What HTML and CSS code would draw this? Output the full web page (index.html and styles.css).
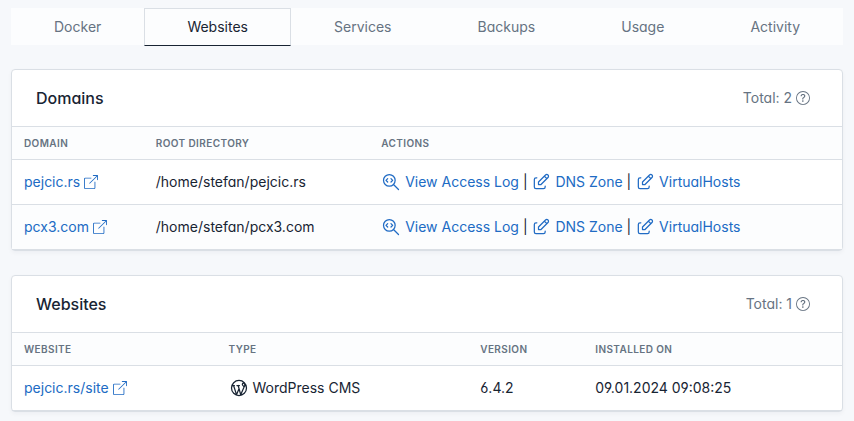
FILE: index.html
```html
<!DOCTYPE html>
<html lang="en">
<head>
<meta charset="utf-8">
<meta name="viewport" content="width=device-width, initial-scale=1">
<title>Websites</title>
<link rel="stylesheet" href="styles.css">
</head>
<body>
<svg class="sprite" aria-hidden="true">
  <symbol id="external" viewBox="0 0 16 16"><path fill="currentColor" d="M8.636 3.5a.5.5 0 0 0-.5-.5H1.5A1.5 1.5 0 0 0 0 4.5v10A1.5 1.5 0 0 0 1.5 16h10a1.5 1.5 0 0 0 1.5-1.5V7.864a.5.5 0 0 0-1 0V14.5a.5.5 0 0 1-.5.5h-10a.5.5 0 0 1-.5-.5v-10a.5.5 0 0 1 .5-.5h6.636a.5.5 0 0 0 .5-.5z"/><path fill="currentColor" d="M16 .5a.5.5 0 0 0-.5-.5h-5a.5.5 0 0 0 0 1h3.793L6.146 9.146a.5.5 0 1 0 .708.708L15 1.707V5.5a.5.5 0 0 0 1 0v-5z"/></symbol>
  <symbol id="question" viewBox="0 0 16 16"><path fill="currentColor" d="M8 15A7 7 0 1 1 8 1a7 7 0 0 1 0 14zm0 1A8 8 0 1 0 8 0a8 8 0 0 0 0 16z"/><path fill="currentColor" d="M5.255 5.786a.237.237 0 0 0 .241.247h.825c.138 0 .248-.113.266-.25.09-.656.54-1.134 1.342-1.134.686 0 1.314.343 1.314 1.168 0 .635-.374.927-.965 1.371-.673.489-1.206 1.06-1.168 1.987l.003.217a.25.25 0 0 0 .25.246h.811a.25.25 0 0 0 .25-.25v-.105c0-.718.273-.927 1.01-1.486.609-.463 1.244-.977 1.244-2.056 0-1.511-1.276-2.241-2.673-2.241-1.267 0-2.655.59-2.75 2.286zm1.557 5.763c0 .533.425.927 1.01.927.609 0 1.028-.394 1.028-.927 0-.552-.42-.94-1.029-.94-.584 0-1.009.388-1.009.94z"/></symbol>
  <symbol id="zoom-code" viewBox="0 0 24 24"><path d="M3 10a7 7 0 1 0 14 0a7 7 0 1 0-14 0M21 21l-6-6M8 8l-2 2l2 2M12 8l2 2l-2 2"/></symbol>
  <symbol id="edit" viewBox="0 0 24 24"><path d="M7 7h-1a2 2 0 0 0-2 2v9a2 2 0 0 0 2 2h9a2 2 0 0 0 2-2v-1M20.385 6.585a2.1 2.1 0 0 0-2.97-2.97l-8.415 8.385v3h3l8.385-8.415zM16 5l3 3"/></symbol>
  <symbol id="wordpress" viewBox="0 0 24 24"><path d="M9.5 9h3M4 9h2.5M11 9l3 11l4-9M5.5 9l3.5 11l3-7M18 11c.177-.528 1-1.364 1-2.5c0-1.78-.776-2.5-1.875-2.5c-.898 0-1.125.812-1.125 1.429c0 1.83 2 2.058 2 3.571zM3 12a9 9 0 1 0 18 0a9 9 0 1 0-18 0"/></symbol>
</svg>

<nav class="tabs" aria-label="Sections">
  <a class="tab" href="#docker">Docker</a>
  <a class="tab active" href="#websites" aria-current="page">Websites</a>
  <a class="tab" href="#services">Services</a>
  <a class="tab" href="#backups">Backups</a>
  <a class="tab" href="#usage">Usage</a>
  <a class="tab" href="#activity">Activity</a>
</nav>

<section class="card">
  <header class="card-header">
    <h3 class="card-title">Domains</h3>
    <div class="card-total">Total: 2 <svg class="glyph"><use href="#question"/></svg></div>
  </header>
  <table class="table striped">
    <thead>
      <tr><th>Domain</th><th>Root directory</th><th>Actions</th></tr>
    </thead>
    <tbody>
      <tr>
        <td><a href="#pejcic">pejcic.rs <svg class="glyph"><use href="#external"/></svg></a></td>
        <td>/home/stefan/pejcic.rs</td>
        <td><a href="#log"><svg class="icon"><use href="#zoom-code"/></svg> View Access Log</a> | <a href="#dns"><svg class="icon"><use href="#edit"/></svg> DNS Zone</a> | <a href="#vhosts"><svg class="icon"><use href="#edit"/></svg> VirtualHosts</a></td>
      </tr>
      <tr>
        <td><a href="#pcx3">pcx3.com <svg class="glyph"><use href="#external"/></svg></a></td>
        <td>/home/stefan/pcx3.com</td>
        <td><a href="#log"><svg class="icon"><use href="#zoom-code"/></svg> View Access Log</a> | <a href="#dns"><svg class="icon"><use href="#edit"/></svg> DNS Zone</a> | <a href="#vhosts"><svg class="icon"><use href="#edit"/></svg> VirtualHosts</a></td>
      </tr>
    </tbody>
  </table>
</section>

<section class="card">
  <header class="card-header">
    <h3 class="card-title">Websites</h3>
    <div class="card-total">Total: 1 <svg class="glyph"><use href="#question"/></svg></div>
  </header>
  <table class="table">
    <thead>
      <tr><th>Website</th><th>Type</th><th>Version</th><th>Installed on</th></tr>
    </thead>
    <tbody>
      <tr>
        <td><a href="#site">pejcic.rs/site <svg class="glyph"><use href="#external"/></svg></a></td>
        <td><svg class="icon"><use href="#wordpress"/></svg> WordPress CMS</td>
        <td>6.4.2</td>
        <td>09.01.2024 09:08:25</td>
      </tr>
    </tbody>
  </table>
</section>
</body>
</html>
```
FILE: styles.css
```css
*,
*::before,
*::after {
  box-sizing: border-box;
}

body {
  margin: 0;
  padding: 8px 11px;
  background: #f6f8fb;
  color: #182433;
  font-family: Inter, "Liberation Sans", sans-serif;
  font-feature-settings: "cv03", "cv04", "cv11";
  font-size: 14px;
  line-height: 20px;
}

a {
  color: #206bc4;
  text-decoration: none;
}

.sprite {
  display: none;
}

.tabs {
  display: flex;
  margin-bottom: 24px;
  background: #fcfdfe;
}

.tab {
  flex: 1 1 auto;
  padding: 8px 16px;
  border: 1px solid transparent;
  margin-bottom: -1px;
  color: #667382;
  text-align: center;
}

.tab.active {
  border-color: #dadfe5;
  border-bottom-color: #182433;
  color: #182433;
}

.card {
  margin-bottom: 24px;
  border: 1px solid #dadfe5;
  border-radius: 4px;
  background: #fff;
  box-shadow: 0 2px 4px rgba(24, 36, 51, 0.04);
}

.card:last-child {
  margin-bottom: 0;
}

.card-header {
  display: flex;
  align-items: center;
  justify-content: space-between;
  padding: 16px 24px;
}

.card-title {
  margin: 0;
  font-size: 16px;
  font-weight: 500;
  line-height: 24px;
}

.card-total {
  padding-right: 8px;
  color: #667382;
}

.table {
  width: 100%;
  border-collapse: separate;
  border-spacing: 0;
}

.table th {
  padding: 8px 12px;
  border-top: 1px solid #dadfe5;
  border-bottom: 1px solid #dadfe5;
  background: #fcfdfe;
  color: #667382;
  font-size: 10px;
  font-weight: 600;
  letter-spacing: 0.4px;
  line-height: 16px;
  text-align: left;
  text-transform: uppercase;
}

.table td {
  padding: 12px;
  border-bottom: 1px solid #dadfe5;
  white-space: nowrap;
}

.striped tbody tr:nth-child(even) {
  background: #fcfdfe;
}

.glyph {
  width: 14px;
  height: 14px;
  overflow: visible;
  vertical-align: -2px;
}

.icon {
  width: 20px;
  height: 20px;
  fill: none;
  stroke: currentColor;
  stroke-width: 1.5;
  stroke-linecap: round;
  stroke-linejoin: round;
  vertical-align: bottom;
}
```
